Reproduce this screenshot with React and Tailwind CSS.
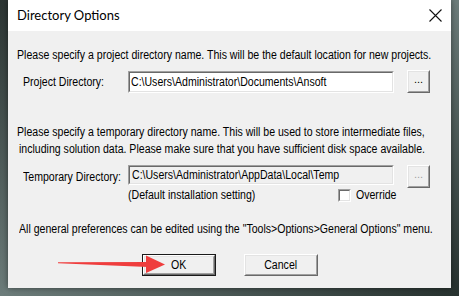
import React from "react";

const uiFont = { fontFamily: "'Liberation Sans', Arial, sans-serif" };

// the dialog uses a narrow sans; squeeze Liberation Sans horizontally to match
function N({ children, className = "" }) {
  return <span className={`inline-block whitespace-nowrap origin-left scale-x-[0.88] ${className}`}>{children}</span>;
}

function Sunken({ className = "", inner = "bg-white", children }) {
  return (
    <div className={`border border-t-[#a0a0a0] border-l-[#a0a0a0] border-b-white border-r-white ${className}`}>
      <div className={`h-full w-full border border-t-[#696969] border-l-[#696969] border-b-[#e3e3e3] border-r-[#e3e3e3] ${inner}`}>
        {children}
      </div>
    </div>
  );
}

function Raised({ className = "", children, isDefault = false }) {
  const body = (
    <div className="h-full w-full border border-t-white border-l-white border-b-[#696969] border-r-[#696969]">
      <div className="h-full w-full border border-t-[#e3e3e3] border-l-[#e3e3e3] border-b-[#a0a0a0] border-r-[#a0a0a0] bg-[#f0f0f0] flex items-center justify-center">
        {children}
      </div>
    </div>
  );
  if (isDefault) {
    return <div className={`border border-[#1a1a1a] ${className}`}>{body}</div>;
  }
  return <div className={className}>{body}</div>;
}

function RedArrow() {
  return (
    <svg className="absolute left-0 top-0 pointer-events-none" width="459" height="296" viewBox="0 0 459 296">
      <polygon points="58,262.3 148,262 148,267 58,263.2" fill="#ef3d3d" />
      <polygon points="146,255.5 165,264.5 146,273" fill="#ef3d3d" />
    </svg>
  );
}

export default function App() {
  return (
    <div className="relative w-[459px] h-[296px] overflow-hidden bg-gradient-to-br from-[#2c3533] via-[#6d7d7b] to-[#27322f]">
      <div className="ml-2 w-[443px] h-[288px] flex flex-col shadow-[0_0_6px_rgba(0,0,0,0.5)]">
        {/* title bar */}
        <div className="h-[31px] bg-white flex items-center justify-between pl-[9px] pr-[9px]">
          <span className="text-[13px] text-black" style={{ fontFamily: "Lato, 'Open Sans', sans-serif" }}>
            Directory Options
          </span>
          <svg width="13" height="13" viewBox="0 0 13 13">
            <path d="M0.5 0.5 L12.5 12.5 M12.5 0.5 L0.5 12.5" stroke="#111" strokeWidth="1.1" />
          </svg>
        </div>

        {/* body */}
        <div className="flex-1 bg-[#f0f0f0] text-[12px] text-black flex flex-col" style={uiFont}>
          <p className="mt-4 ml-[9px] leading-4">
            <N>Please specify a project directory name. This will be the default location for new projects.</N>
          </p>

          <div className="mt-[7px] flex items-center h-[23px]">
            <span className="ml-[15px] w-[105px] leading-4">
              <N>Project Directory:</N>
            </span>
            <Sunken className="w-[266px] h-[22px]" inner="bg-white flex items-center pl-[1px] leading-4">
              <N>C:\Users\Administrator\Documents\Ansoft</N>
            </Sunken>
            <Raised className="ml-[13px] w-[23px] h-[23px]">
              <span className="text-[11px] leading-none -mt-1">...</span>
            </Raised>
          </div>

          <div className="mt-[31px] ml-[9px] leading-[17px]">
            <p>
              <N>Please specify a temporary directory name. This will be used to store intermediate files,</N>
            </p>
            <p className="pl-[2px]">
              <N>including solution data. Please make sure that you have sufficient disk space available.</N>
            </p>
          </div>

          <div className="mt-[7px] flex items-start h-[23px]">
            <span className="ml-[15px] w-[105px] self-center pt-[1px] leading-4">
              <N>Temporary Directory:</N>
            </span>
            <Sunken className="w-[266px] h-[20px]" inner="bg-[#f0f0f0] flex items-center pl-[2px] leading-4">
              <N>C:\Users\Administrator\AppData\Local\Temp</N>
            </Sunken>
            <Raised className="ml-[13px] w-[23px] h-[23px]">
              <span className="text-[11px] leading-none -mt-1 text-[#a0a0a0]">...</span>
            </Raised>
          </div>

          <div className="flex items-center h-[14px] leading-4">
            <span className="ml-[120px] w-[210px]">
              <N>(Default installation setting)</N>
            </span>
            <Sunken className="w-[13px] h-[13px]" />
            <span className="ml-[5px]">
              <N>Override</N>
            </span>
          </div>

          <p className="mt-[19px] ml-[11px] leading-4">
            <N>All general preferences can be edited using the "Tools&gt;Options&gt;General Options" menu.</N>
          </p>

          <div className="mt-[17px] flex h-[22px] leading-4">
            <Raised isDefault className="ml-[134px] w-[74px] h-[22px]">
              <span className="inline-block origin-center scale-x-[0.88]">OK</span>
            </Raised>
            <Raised className="ml-[28px] w-[74px] h-[22px]">
              <span className="inline-block origin-center scale-x-[0.88]">Cancel</span>
            </Raised>
          </div>
        </div>
      </div>
      <RedArrow />
    </div>
  );
}
